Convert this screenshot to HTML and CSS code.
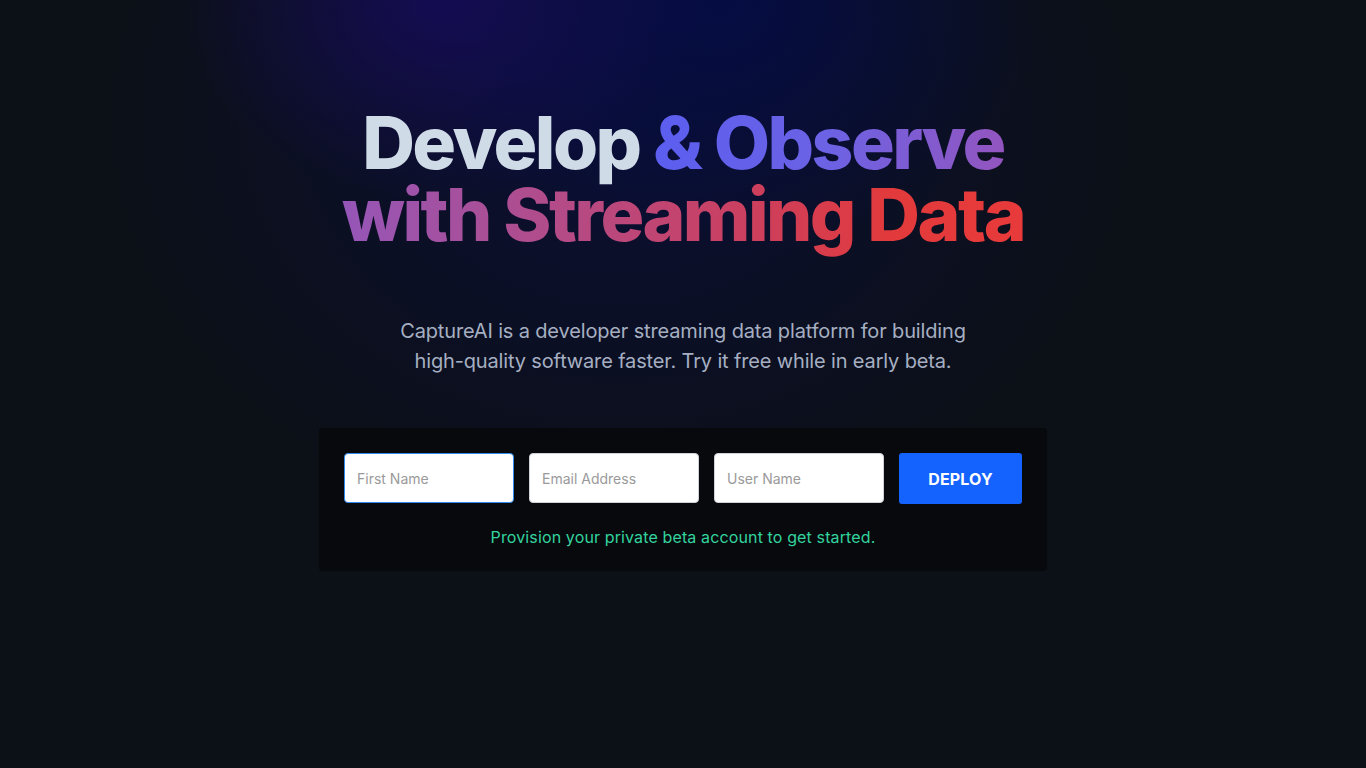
FILE: index.html
```html
<!DOCTYPE html>
<html lang="en">
<head>
<meta charset="utf-8">
<title>CaptureAI</title>
<link rel="stylesheet" href="styles.css">
</head>
<body>
<main class="hero">
  <h1 class="title">
    <span class="line"><span class="plain">Develop</span> <span class="grad grad-1">&amp; Observe</span></span>
    <span class="line grad grad-2">with Streaming Data</span>
  </h1>
  <p class="lead">CaptureAI is a developer streaming data platform for building high-quality software faster. Try it free while in early beta.</p>
  <form class="card">
    <div class="fields">
      <input class="field focused" type="text" placeholder="First Name" autofocus>
      <input class="field" type="email" placeholder="Email Address">
      <input class="field" type="text" placeholder="User Name">
      <button class="deploy" type="button">DEPLOY</button>
    </div>
    <p class="hint">Provision your private beta account to get started.</p>
  </form>
</main>
</body>
</html>
```
FILE: styles.css
```css
* { box-sizing: border-box; }
html, body { height: 100%; }
body {
  margin: 0;
  font-family: Inter, "Noto Sans", sans-serif;
  background-color: #0c1017;
  background-image:
    radial-gradient(ellipse 260px 200px at 440px 0px, rgba(22, 12, 90, 0.85), rgba(22, 12, 90, 0) 100%),
    radial-gradient(ellipse 320px 260px at 720px 0px, rgba(4, 12, 70, 0.9), rgba(4, 12, 70, 0) 100%),
    radial-gradient(ellipse 520px 420px at 620px 120px, rgba(10, 14, 60, 0.75), rgba(10, 14, 60, 0) 100%);
  background-repeat: no-repeat;
  color: #fff;
}
.hero {
  display: flex;
  flex-direction: column;
  align-items: center;
  padding-top: 107px;
}
.title {
  margin: 0;
  font-size: 73px;
  line-height: 72px;
  font-weight: 800;
  letter-spacing: -0.035em;
  text-align: center;
  display: flex;
  flex-direction: column;
  align-items: center;
}
.line { display: block; }
.plain { color: #d0dbe8; }
.grad {
  background-clip: text;
  -webkit-background-clip: text;
  color: transparent;
  -webkit-text-fill-color: transparent;
}
.line.grad {
  padding-bottom: 14px;
  margin-bottom: -14px;
}
.grad-1 { background-image: linear-gradient(90deg, #5b5ef0 0%, #6c62e4 50%, #9355bf 100%); }
.grad-2 { background-image: linear-gradient(90deg, #9556b8 0%, #b24c8a 30%, #cc3f5e 60%, #e23a3c 80%, #e83a3a 100%); }
.lead {
  margin: 65px 0 0;
  max-width: 580px;
  font-size: 20px;
  line-height: 30px;
  letter-spacing: -0.15px;
  color: #a6afc2;
  text-align: center;
}
.card {
  margin-top: 52px;
  width: 728px;
  padding: 25px 25px 22px;
  background: #07090d;
  border-radius: 4px;
}
.fields {
  display: flex;
  gap: 15px;
  align-items: flex-start;
}
.field {
  width: 170px;
  height: 50px;
  padding: 0 12px;
  border: 1px solid #cfd3d8;
  border-radius: 4px;
  background: #fff;
  font-family: Inter, "Noto Sans", sans-serif;
  font-size: 14px;
  color: #333;
  outline: none;
}
.field::placeholder { color: #9a9a9a; }
.field.focused { border-color: #2f8bf0; }
.deploy {
  width: 123px;
  height: 51px;
  border: none;
  border-radius: 3px;
  background: #1463ff;
  color: #fff;
  font-family: Inter, "Noto Sans", sans-serif;
  font-size: 16px;
  font-weight: 700;
  letter-spacing: 0.01em;
}
.hint {
  margin: 21px 0 0;
  text-align: center;
  font-size: 16px;
  line-height: 24px;
  letter-spacing: 0.008em;
  color: #34d39e;
}
```
